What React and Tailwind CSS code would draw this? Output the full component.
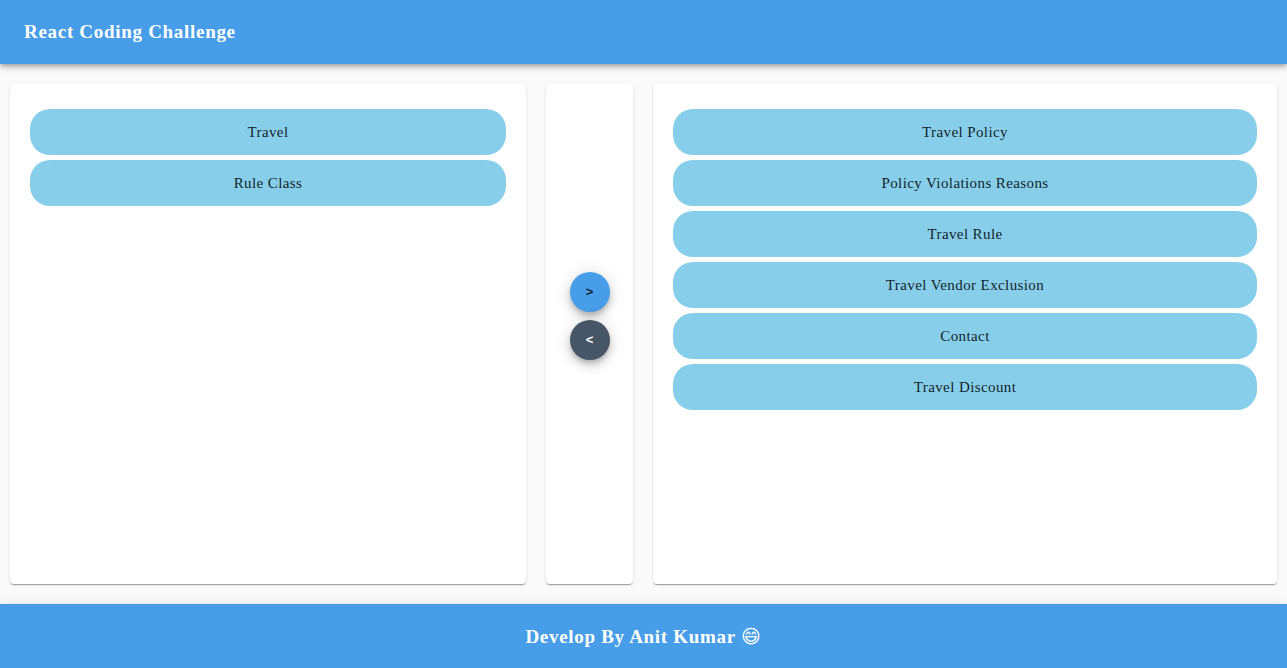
const left = ["Travel", "Rule Class"];
const right = [
  "Travel Policy",
  "Policy Violations Reasons",
  "Travel Rule",
  "Travel Vendor Exclusion",
  "Contact",
  "Travel Discount",
];

const paper =
  "rounded bg-white shadow-[0_2px_1px_-1px_rgba(0,0,0,0.2),0_1px_1px_0_rgba(0,0,0,0.14),0_1px_3px_0_rgba(0,0,0,0.12)]";
const bar =
  "flex min-h-16 items-center bg-[#479de8] px-6 text-[19px] leading-8 font-bold tracking-[0.7px] text-white shadow-[0_2px_4px_-1px_rgba(0,0,0,0.2),0_4px_5px_0_rgba(0,0,0,0.14),0_1px_10px_0_rgba(0,0,0,0.12)]";
const fab =
  "flex size-10 items-center justify-center rounded-full font-['Liberation_Sans',sans-serif] text-[13px] leading-6 font-bold shadow-[0_3px_5px_-1px_rgba(0,0,0,0.2),0_6px_10px_0_rgba(0,0,0,0.14),0_1px_18px_0_rgba(0,0,0,0.12)]";

function ItemList({ items, label }) {
  return (
    <ul aria-label={label} className="flex flex-col gap-[5px]">
      {items.map((item) => (
        <li key={item}>
          <button
            type="button"
            className="block w-full rounded-[20px] bg-[#87ceeb] py-[11px] text-center text-[15px] leading-6 tracking-[0.4px] text-black/87"
          >
            {item}
          </button>
        </li>
      ))}
    </ul>
  );
}

export default function App() {
  return (
    <div className="flex min-h-screen flex-col bg-[#fafafa] font-['Liberation_Serif','DejaVu_Sans',serif]">
      <header className={bar}>
        <h1>React Coding Challenge</h1>
      </header>
      <main className="grid grow grid-cols-[516fr_87fr_624fr] gap-5 px-2.5 py-5">
        <section className={`${paper} min-h-[500px] px-5 py-[25px]`}>
          <ItemList items={left} label="Available" />
        </section>
        <section className={`${paper} flex flex-col items-center justify-center gap-2 pb-9`}>
          <button type="button" aria-label="Move right" className={`${fab} bg-[#479de8] text-black/80`}>
            &gt;
          </button>
          <button type="button" aria-label="Move left" className={`${fab} bg-[#465666] text-white`}>
            &lt;
          </button>
        </section>
        <section className={`${paper} px-5 py-[25px]`}>
          <ItemList items={right} label="Selected" />
        </section>
      </main>
      <footer className={`${bar} justify-center`}>
        <p>
          Develop By Anit Kumar <span className="font-['DejaVu_Sans',sans-serif] font-normal">😄</span>
        </p>
      </footer>
    </div>
  );
}
